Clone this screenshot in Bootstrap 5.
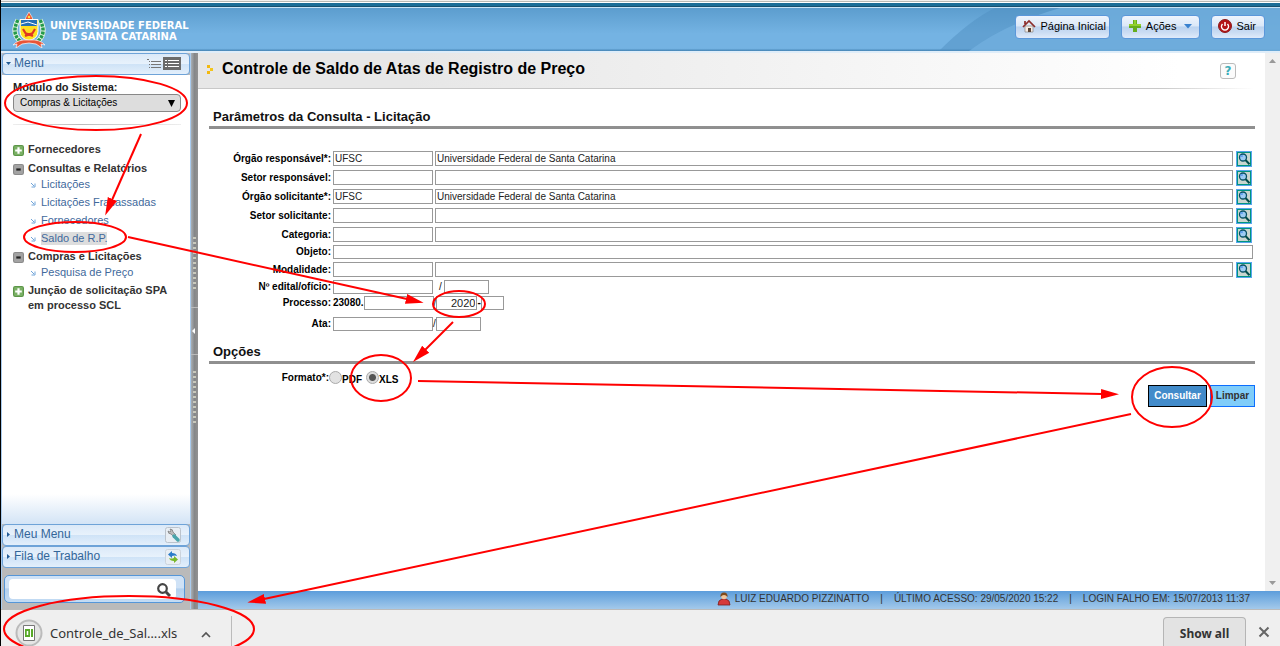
<!DOCTYPE html>
<html lang="pt-BR">
<head>
<meta charset="utf-8">
<meta name="viewport" content="width=device-width, initial-scale=1">
<title>Controle de Saldo de Atas de Registro de Preço</title>
<link href="https://cdn.jsdelivr.net/npm/bootstrap@5.3.0/dist/css/bootstrap.min.css" rel="stylesheet">
<style>
  body { font-family: "Liberation Sans", Arial, sans-serif; font-size: 12px; line-height: 15px; color: #111; }
  .app { border-left: 1px solid #000; }
  a { text-decoration: none; }
  .top-strip { height: 8px; background: linear-gradient(#f1f0ef 0 1px, #b9b9b4 1px 2px, #fff 2px 3px, #1b6d97 3px 6px, #17506f 6px 7px, #c9e2f5 7px 8px); }
  .site-header { height: 45px; padding: 0 15px 0 10px; border-bottom: 2px solid #dfedf9; background: linear-gradient(#5c9dce, #74b3e3 60%, #74b3e3 94%, #4483b3); overflow: hidden; }
  .header-sweep { top: 0; right: 0; width: 345px; height: 43px; }
  .brand { font: bold 10px/11px "DejaVu Sans", Verdana, sans-serif; color: #fff; text-align: right; gap: 3px; }
  .top-btn { height: 24px; padding: 0 3px 2px 6px; border: 1px solid #5b97da; border-radius: 4px; background: linear-gradient(#eef4fd, #dbe8f8 45%, #bcd3ef 50%, #cadcf3 75%, #dfeafa); font-size: 11px; line-height: 12px; color: #000; }
  .sidebar { width: 190px; border: 1px solid #a9cbee; border-top: 0; border-bottom: 0; background: #bababa; }
  .panel-head { height: 22px; padding: 0 8px 1px 3px; border: 1px solid #6ea3d8; border-radius: 4px; background: linear-gradient(#dbe9f8, #e8f2fc 50%, #cfe3f7 52%, #e3effb); color: #336699; font-size: 12px; gap: 3px; }
  .menu-body { padding: 5px 9px 0 11px; background: linear-gradient(#fff calc(100% - 30px), #d3e4f6); }
  .menu-body label { font-weight: bold; font-size: 11px; line-height: 14px; color: #222; }
  .module-select { height: 18px; padding: 0 6px; border: 1px solid #888; border-radius: 4px; font-size: 10px; line-height: 16px; color: #000; background: #ddd url("data:image/svg+xml,%3Csvg xmlns='http://www.w3.org/2000/svg' width='7' height='7'%3E%3Cpath d='M0 0H7L3.500 7z'/%3E%3C/svg%3E") no-repeat right 5px center; }
  .rule { height: 1px; margin: 12px 0 17px; background: linear-gradient(90deg, #eee, #bbb 40%, #eee); }
  .tree { font-size: 11px; line-height: 15px; }
  .tree .group { font-weight: bold; color: #333; gap: 4px; padding-bottom: 4px; }
  .tree .group svg { margin-top: 3px; }
  .tree .leaves { padding: 0 0 0 17px; margin: -3px 0 1px; }
  .tree .leaves li { height: 18px; gap: 5px; line-height: 13px; padding-top: 1px; }
  .tree .leaves li:last-child { height: 17px; }
  .tree .leaves svg { margin-top: 4px; }
  .tree a { color: #41699c; }
  .tree a.current { background: #ddd; }
  .search-wrap { height: 41px; padding: 7px 5px 6px 2px; }
  .search-box { height: 28px; padding: 3px 8px 3px 4px; border: 1px solid #5596d8; border-radius: 5px; background: linear-gradient(#cfe2f6 45%, #b3d0ee 50%, #c4dcf4); }
  .search-inner { background: #fff; border-radius: 4px; padding-right: 5px; }
  .splitter { width: 7px; background: linear-gradient(90deg, #a9afb4, #858789 50%, #929292); }
  .grip { width: 3px; height: 54px; margin: 16px 0; background: repeating-linear-gradient(#c9c9bd 0 2px, transparent 2px 5px); }
  .fold { width: 7px; height: 48px; border: solid #bbb; border-width: 1px 0; }
  .title-band { height: 35px; padding: 0 29px 3px 9px; background: linear-gradient(90deg, #e7e7e7 20%, #fff 92%); }
  .title-band h1 { font-size: 16px; line-height: 20px; font-weight: bold; margin: 0; color: #000; }
  .title-line { height: 1px; background: linear-gradient(90deg, #c8c8c8 90%, #fff 99%); }
  .help-btn { width: 16px; height: 16px; margin-top: 3px; border: 1px solid #bbb; border-radius: 3px; background: #fbfbfb; color: #3badb8; font: bold 12px/14px "DejaVu Sans", sans-serif; }
  .content { padding: 0 10px 0 11px; }
  .content h2 { font-size: 13px; line-height: 16px; font-weight: bold; color: #111; padding: 0 4px 1px; margin: 0; border-bottom: 3px solid #a9a9a9; border-image: linear-gradient(#c4c4c4, #8e8e8e) 1; }
  .form-line { height: 19px; gap: 2px; padding-right: 3px; font-size: 10px; line-height: 12px; }
  .form-line.short { height: 16px; padding-right: 2px; }
  .form-line > .lbl { width: 122px; text-align: right; }
  .form-line label, .form-line .pre { font-weight: bold; color: #000; }
  .fld { height: 15px; padding: 0 1px; border: 1px solid #999; border-radius: 0; background: #fff; font-size: 10px; line-height: 13px; color: #222; min-width: 0; }
  .short .fld { height: 14px; line-height: 12px; }
  .w-code { width: 100px; } .w-num { width: 45px; } .w-proc { width: 70px; } .w-year { width: 41px; } .w-dig { width: 23px; }
  .fld.w-year { font-size: 11px; }
  .lookup { width: 16px; height: 16px; margin-left: 1px; }
  .fmt-radio { width: 13px; height: 13px; margin: 0; appearance: none; border: 1px solid #aaa; border-radius: 50%; background: #e2e2e2; }
  .fmt-radio:checked { background: radial-gradient(#555 0 3px, #ddd 4px); }
  .act { height: 22px; padding: 0; border-radius: 0; font-size: 10px; line-height: 12px; font-weight: bold; }
  .act-go { width: 59px; background: #428bca; border: 1px solid #000; color: #fff; }
  .act-clear { width: 45px; background: #80cdf9; border: 1px solid #0d6efd; color: #333; }
  .scroll-rail { width: 15px; background: #f0f0f0; padding: 6px 0; }
  .status { height: 18px; padding: 0 30px 3px 0; background: linear-gradient(#5c9ddb, #a3c9ea); font-size: 10px; line-height: 12px; color: #333; gap: 11px; }
  .downloads { height: 37px; border-top: 1px solid #bbb; background: #efefef; font-family: "Noto Sans", sans-serif; font-size: 13px; color: #333; padding: 0 10px 0 14px; }
  .dl-item { height: 30px; border-right: 1px solid #bbb; gap: 7px; width: 217px; padding-top: 4px; }
  .show-all { width: 83px; height: 29px; padding: 3px 0 0; border: 1px solid #b5b5b5; border-bottom: 0; border-radius: 4px 4px 0 0; background: #e3e3e3; font: bold 12px/16px "Noto Sans", sans-serif; color: #333; }
  .notes { inset: 0; pointer-events: none; z-index: 10; }
</style>
</head>
<body>
<svg class="d-none" aria-hidden="true">
  <symbol id="i-plus" viewBox="0 0 10 10"><rect x=".5" y=".5" width="9" height="9" rx="1.500" fill="#7ab065" stroke="#5c9648"/><path d="M5 2v6M2 5h6" stroke="#fff" stroke-width="2"/></symbol>
  <symbol id="i-minus" viewBox="0 0 10 10"><rect x=".5" y=".5" width="9" height="9" rx="1.500" fill="#a3a3a3" stroke="#8b8b8b"/><path d="M3 5h4" stroke="#222" stroke-width="2"/></symbol>
  <symbol id="i-leaf" viewBox="0 0 6 6"><path d="M1 1l3 3M5 1.500V5H1.500" fill="none" stroke="#70a4d8"/></symbol>
  <symbol id="i-lens" viewBox="0 0 16 16"><rect width="16" height="16" fill="#58a5ee"/><rect x="1.500" y="1.500" width="13" height="13" fill="#c9d6cf" stroke="#009480"/><circle cx="7" cy="6.500" r="3.500" fill="#9dccf3" stroke="#075064" stroke-width="1.300"/><path d="M5 6V5h2" fill="none" stroke="#5d9df0" stroke-width="1.500"/><path d="M9.500 9l4 4.300" stroke="#034c4b" stroke-width="2"/></symbol>
</svg>

<div class="app position-relative d-flex flex-column vh-100 overflow-hidden">
  <div class="top-strip flex-shrink-0"></div>
  <header class="site-header position-relative d-flex align-items-start flex-shrink-0">
    <svg class="header-sweep position-absolute" viewBox="0 0 345 43" preserveAspectRatio="none"><path d="M4 43Q35 12 60 0H345V43Z" fill="#4f8fc1" opacity=".5"/><path d="M34 43Q70 16 125 0H345V43Z" fill="#73b0df" opacity=".75"/></svg>
    <a href="#" class="brand d-flex position-relative mt-1">
      <svg width="36" height="36" viewBox="0 0 34 36" role="img" aria-label="Brasão UFSC">
        <g fill="none" stroke="#e9f5e6" stroke-width="5"><path d="M6 8Q-1 21 8 29M28 8Q35 21 26 29"/></g>
        <g fill="none" stroke="#249a4a" stroke-width="3.500" stroke-dasharray="3 1"><path d="M6 8Q-1 21 8 29M28 8Q35 21 26 29"/></g>
        <path d="M13 8l1-3 3-5 3 5 1 3z" fill="#ef5430" stroke="#fff" stroke-width=".6"/><circle cx="17" cy="5" r="1.300" fill="#ffdf40"/>
        <path d="M8 7.500h18v12q0 7-9 9-9-2-9-9z" fill="#ffe01f" stroke="#fff"/><path d="M9 8h16v6H9z" fill="#2370b5"/><path d="M9 12l7-2 9 3" stroke="#fff" fill="none"/>
        <path d="M11 17l3 5h6l3-5M13 24l8-3M21 24l-8-3" fill="none" stroke="#df3623" stroke-width="2.200"/>
        <path d="M1 33q5-6 16-5 11-1 16 5l-4-1 1 4-6-4-7-1-7 1-6 4 1-4z" fill="#e95537" stroke="#fff" stroke-width=".7"/>
      </svg>
      <span class="pt-1 mt-1">UNIVERSIDADE FEDERAL<br><span class="me-2 pe-1">DE SANTA CATARINA</span></span>
    </a>
    <nav class="position-relative d-flex ms-auto" style="gap:11px; margin-top:7px" aria-label="Principal">
      <button class="top-btn d-flex align-items-center gap-1" type="button"><svg width="14" height="14" viewBox="0 0 14 14"><path d="M3 7h8v6H3z" fill="#f7ece4" stroke="#888" stroke-width=".7"/><path d="M1 8l6-6 6 6M3 2v3" fill="none" stroke="#8d2e2c" stroke-width="1.700"/><path d="M6 9h3v4H6z" fill="#5b4335"/></svg>Página Inicial</button>
      <button class="top-btn d-flex align-items-center gap-1" type="button"><svg width="14" height="14" viewBox="0 0 14 14"><path d="M7 1v12M1 7h12" stroke="#65ad1e" stroke-width="4"/><path d="M7 1v5M1 6h12" stroke="#91cf30" stroke-width="2"/></svg>Ações<svg class="ms-1 me-1" width="8" height="5" viewBox="0 0 8 5"><path d="M0 0h8L4 4.500z" fill="#3981cf"/></svg></button>
      <button class="top-btn d-flex align-items-center gap-1 pe-2" type="button"><svg width="14" height="14" viewBox="0 0 14 14"><circle cx="7" cy="7" r="6.500" fill="#b41417" stroke="#8a1c1c"/><path d="M7 3v4M4.500 5a3.500 3.500 0 1 0 5 0" fill="none" stroke="#fff" stroke-width="1.500"/></svg>Sair</button>
    </nav>
  </header>

  <div class="d-flex flex-grow-1" style="min-height:0">
    <aside class="sidebar d-flex flex-column flex-shrink-0">
      <div class="panel-head d-flex align-items-center"><svg width="5" height="3" viewBox="0 0 5 3"><path d="M0 0h5L2.500 3z" fill="#225b96"/></svg>Menu
        <svg class="ms-auto" width="34" height="14" viewBox="0 0 34 14"><path d="M0 2.500h2M4 4.500h10M4 7.500h10M4 10.500h10M2 4.500h1M2 7.500h1M2 10.500h1" stroke="#777"/><rect x="16" width="18" height="13" fill="#6b6b6b"/><path d="M18 3.500h2M21 3.500h11M18 6.500h2M21 6.500h11M18 9.500h2M21 9.500h11" stroke="#fff"/></svg></div>
      <div class="menu-body flex-grow-1">
        <label class="d-block" for="modulo">Módulo do Sistema:</label>
        <select id="modulo" class="module-select form-select"><option>Compras &amp; Licitações</option></select>
        <div class="rule"></div>
        <nav class="tree" aria-label="Menu">
          <div class="group d-flex align-items-start"><svg width="11" height="11"><use href="#i-plus"/></svg>Fornecedores</div>
          <div class="group d-flex align-items-start"><svg width="11" height="11"><use href="#i-minus"/></svg>Consultas e Relatórios</div>
          <ul class="leaves list-unstyled">
            <li class="d-flex align-items-start"><svg width="6" height="6"><use href="#i-leaf"/></svg><a href="#">Licitações</a></li>
            <li class="d-flex align-items-start"><svg width="6" height="6"><use href="#i-leaf"/></svg><a href="#">Licitações Fracassadas</a></li>
            <li class="d-flex align-items-start"><svg width="6" height="6"><use href="#i-leaf"/></svg><a href="#">Fornecedores</a></li>
            <li class="d-flex align-items-start"><svg width="6" height="6"><use href="#i-leaf"/></svg><a href="#" class="current">Saldo de R.P.</a></li>
          </ul>
          <div class="group d-flex align-items-start"><svg width="11" height="11"><use href="#i-minus"/></svg>Compras e Licitações</div>
          <ul class="leaves list-unstyled">
            <li class="d-flex align-items-start"><svg width="6" height="6"><use href="#i-leaf"/></svg><a href="#">Pesquisa de Preço</a></li>
          </ul>
          <div class="group d-flex align-items-start"><svg width="11" height="11"><use href="#i-plus"/></svg><span>Junção de solicitação SPA<br>em processo SCL</span></div>
        </nav>
      </div>
      <div class="panel-head d-flex align-items-center"><svg width="5" height="5" viewBox="0 0 5 5"><path d="M1 0v5l3-2.500z" fill="#225b96"/></svg>Meu Menu
        <svg class="ms-auto" width="16" height="16" viewBox="0 0 16 16"><rect x=".5" y=".5" width="15" height="15" rx="2" fill="#e8eef4" stroke="#bbc3cc"/><path d="M3 4l2 1 1-1-1-2q3 0 3 3l3 3-2 2-3-3q-3 0-3-3z" fill="#bbb" stroke="#777" stroke-width=".7"/><path d="M9 9l4 4" stroke="#4aa5ab" stroke-width="3.500" stroke-linecap="round"/></svg></div>
      <div class="panel-head d-flex align-items-center"><svg width="5" height="5" viewBox="0 0 5 5"><path d="M1 0v5l3-2.500z" fill="#225b96"/></svg>Fila de Trabalho
        <svg class="ms-auto" width="16" height="16" viewBox="0 0 16 16"><rect x=".5" y=".5" width="15" height="15" rx="2" fill="#e8eef4" stroke="#cbd3dc"/><path d="M3 5.500L7 2v2q4 0 5 3-2-1-5 0v2z" fill="#2b7cc9"/><path d="M13 10.500L9 14v-2q-4 0-5-3 2 1 5 0V7z" fill="#78b82a"/></svg></div>
      <div class="search-wrap">
        <form class="search-box"><div class="search-inner d-flex align-items-center h-100">
          <input class="form-control form-control-sm border-0 bg-transparent p-0 ps-1 shadow-none" style="min-height:0" type="text" aria-label="Buscar no menu">
          <button class="btn p-0 border-0 lh-1" type="button" aria-label="Buscar"><svg width="14" height="14" viewBox="0 0 14 14"><circle cx="5.500" cy="5.500" r="4.300" fill="none" stroke="#444" stroke-width="2.200"/><path d="M9 9l4 4" stroke="#444" stroke-width="3"/></svg></button>
        </div></form>
      </div>
    </aside>
    <div class="splitter d-flex flex-column align-items-center justify-content-center flex-shrink-0">
      <div class="grip"></div><div class="fold d-flex align-items-center"><svg width="5" height="6" viewBox="0 0 5 6"><path d="M4 0v6L1 3z" fill="#fff"/></svg></div><div class="grip"></div>
    </div>

    <div class="d-flex flex-column flex-grow-1" style="min-width:0">
      <div class="d-flex flex-grow-1 bg-white">
        <main class="flex-grow-1">
          <div class="title-band d-flex align-items-center">
            <svg class="me-2" width="7" height="9" viewBox="0 0 7 9"><path d="M0 0h3v3H0zM0 6h3v3H0z" fill="#f3b90f"/><path d="M3 3h3v3H3z" fill="#f3c51c"/></svg>
            <h1>Controle de Saldo de Atas de Registro de Preço</h1>
            <button class="help-btn ms-auto p-0 d-flex align-items-center justify-content-center" type="button" aria-label="Ajuda">?</button>
          </div>
          <div class="title-line"></div>
          <form class="content">
            <h2 style="margin-top:20px">Parâmetros da Consulta - Licitação</h2>
            <div style="margin-top:20px">
              <div class="form-line d-flex align-items-center"><label class="lbl" for="c1">Órgão responsável*:</label><input id="c1" class="fld w-code" value="UFSC"><input class="fld flex-grow-1" aria-label="Nome do órgão responsável" value="Universidade Federal de Santa Catarina"><button class="lookup p-0 border-0 d-flex" type="button" aria-label="Pesquisar"><svg width="16" height="16"><use href="#i-lens"/></svg></button></div>
              <div class="form-line d-flex align-items-center"><label class="lbl" for="c2">Setor responsável:</label><input id="c2" class="fld w-code"><input class="fld flex-grow-1" aria-label="Nome do setor responsável"><button class="lookup p-0 border-0 d-flex" type="button" aria-label="Pesquisar"><svg width="16" height="16"><use href="#i-lens"/></svg></button></div>
              <div class="form-line d-flex align-items-center"><label class="lbl" for="c3">Órgão solicitante*:</label><input id="c3" class="fld w-code" value="UFSC"><input class="fld flex-grow-1" aria-label="Nome do órgão solicitante" value="Universidade Federal de Santa Catarina"><button class="lookup p-0 border-0 d-flex" type="button" aria-label="Pesquisar"><svg width="16" height="16"><use href="#i-lens"/></svg></button></div>
              <div class="form-line d-flex align-items-center"><label class="lbl" for="c4">Setor solicitante:</label><input id="c4" class="fld w-code"><input class="fld flex-grow-1" aria-label="Nome do setor solicitante"><button class="lookup p-0 border-0 d-flex" type="button" aria-label="Pesquisar"><svg width="16" height="16"><use href="#i-lens"/></svg></button></div>
              <div class="form-line d-flex align-items-center"><label class="lbl" for="c5">Categoria:</label><input id="c5" class="fld w-code"><input class="fld flex-grow-1" aria-label="Nome da categoria"><button class="lookup p-0 border-0 d-flex" type="button" aria-label="Pesquisar"><svg width="16" height="16"><use href="#i-lens"/></svg></button></div>
              <div class="form-line short d-flex align-items-center"><label class="lbl" for="c6">Objeto:</label><input id="c6" class="fld flex-grow-1"></div>
              <div class="form-line d-flex align-items-center"><label class="lbl" for="c7">Modalidade:</label><input id="c7" class="fld w-code"><input class="fld flex-grow-1" aria-label="Nome da modalidade"><button class="lookup p-0 border-0 d-flex" type="button" aria-label="Pesquisar"><svg width="16" height="16"><use href="#i-lens"/></svg></button></div>
              <div class="form-line short d-flex align-items-center"><label class="lbl" for="c8">Nº edital/ofício:</label><input id="c8" class="fld w-code"><span class="ms-1">/</span><input class="fld w-num" aria-label="Ano do edital"></div>
              <div class="form-line short d-flex align-items-center"><label class="lbl" for="c9">Processo:</label><div class="d-flex align-items-center"><span class="pre">23080.</span><input id="c9" class="fld w-proc"><span>/</span><input class="fld w-year text-end" aria-label="Ano do processo" value="2020"><span class="pre">-</span><input class="fld w-dig" aria-label="Dígito"></div></div>
              <div class="form-line short d-flex align-items-center" style="margin-top:5px"><label class="lbl" for="c10">Ata:</label><div class="d-flex align-items-center"><input id="c10" class="fld w-code"><span>/</span><input class="fld w-num" aria-label="Ano da ata"></div></div>
            </div>
            <h2 style="margin-top:12px">Opções</h2>
            <div class="form-line d-flex align-items-center mt-1 gap-0" role="radiogroup" aria-label="Formato">
              <span class="lbl pre" style="width:120px">Formato*:</span>
              <input class="fmt-radio" type="radio" name="fmt" id="pdf"><label for="pdf" class="pt-1 me-1">PDF</label>
              <input class="fmt-radio" type="radio" name="fmt" id="xls" checked><label for="xls" class="pt-1">XLS</label>
            </div>
            <div class="d-flex justify-content-end" style="gap:3px; margin-top:-2px">
              <button class="act act-go" type="button">Consultar</button><button class="act act-clear" type="reset">Limpar</button>
            </div>
          </form>
        </main>
        <div class="scroll-rail d-flex flex-column align-items-center justify-content-between flex-shrink-0"><svg width="7" height="4" viewBox="0 0 7 4"><path d="M0 4h7L3.500 0z" fill="#999"/></svg><svg width="7" height="4" viewBox="0 0 7 4"><path d="M0 0h7L3.500 4z" fill="#999"/></svg></div>
      </div>
      <footer class="status d-flex align-items-center justify-content-end flex-shrink-0">
        <span class="d-flex align-items-center gap-1"><svg width="14" height="14" viewBox="0 0 14 14"><path d="M1 13q0-5 4-6h4q4 1 4 6z" fill="#d63a3a" stroke="#7a2020" stroke-width=".8"/><circle cx="7" cy="4.500" r="2.800" fill="#f2c69b"/><path d="M3.500 5Q3 .5 7 .5T10.500 5Q9 3 7 3T3.500 5z" fill="#7d4a1d"/></svg>LUIZ EDUARDO PIZZINATTO</span>
        <span>|</span><span>ÚLTIMO ACESSO: 29/05/2020 15:22</span><span>|</span><span>LOGIN FALHO EM: 15/07/2013 11:37</span>
      </footer>
    </div>
  </div>

  <div class="downloads d-flex align-items-end flex-shrink-0">
    <div class="dl-item d-flex align-items-center">
      <svg width="28" height="28" viewBox="0 0 28 28"><circle cx="14" cy="14" r="12.500" fill="#e5e5e5" stroke="#bbb" stroke-width="2"/><path d="M8.500 6.500h11v15h-11z" fill="#fff" stroke="#777"/><path d="M10 10h5v8h-5zM16 10h2v8h-2z" fill="#58a929"/><path d="M12.500 12v4" stroke="#fff" stroke-width="1.500"/></svg>
      <span>Controle_de_Sal….xls</span>
      <button class="btn p-0 border-0 lh-1 ms-auto me-3" type="button" aria-label="Opções do arquivo"><svg class="me-1" width="10" height="7" viewBox="0 0 10 7"><path d="M1 6l4-4 4 4" fill="none" stroke="#555" stroke-width="1.700"/></svg></button>
    </div>
    <button class="show-all ms-auto" type="button">Show all</button>
    <button class="btn p-0 border-0 lh-1 ms-2 mb-2" type="button" aria-label="Fechar"><svg class="ms-1" width="12" height="12" viewBox="0 0 12 12"><path d="M1.500 1.500l9 9M10.500 1.500l-9 9" stroke="#666" stroke-width="2"/></svg></button>
  </div>
</div>

<svg class="notes position-absolute w-100 h-100" viewBox="0 0 1280 646" preserveAspectRatio="none" fill="none" stroke="#f00" stroke-width="2" aria-hidden="true">
  <defs><marker id="tip" markerUnits="userSpaceOnUse" markerWidth="20" markerHeight="12" refX="1" refY="6" orient="auto"><path d="M0 1L18 6L0 11z" fill="#f00" stroke="none"/></marker></defs>
  <ellipse cx="96" cy="103" rx="91" ry="27"/><ellipse cx="75" cy="237" rx="51" ry="15"/><ellipse cx="459" cy="304" rx="26" ry="13"/><ellipse cx="381" cy="378" rx="30" ry="23"/><ellipse cx="1172" cy="397" rx="40" ry="30"/><ellipse cx="129" cy="629" rx="125" ry="33"/>
  <path d="M141 134L112 200" marker-end="url(#tip)"/><path d="M128 237L407 299" marker-end="url(#tip)"/><path d="M453 322L425 350" marker-end="url(#tip)"/><path d="M418 381L1102 394" marker-end="url(#tip)"/><path d="M1131 414L264 599" marker-end="url(#tip)"/>
</svg>
<script src="https://cdn.jsdelivr.net/npm/bootstrap@5.3.0/dist/js/bootstrap.bundle.min.js"></script>
</body>
</html>
